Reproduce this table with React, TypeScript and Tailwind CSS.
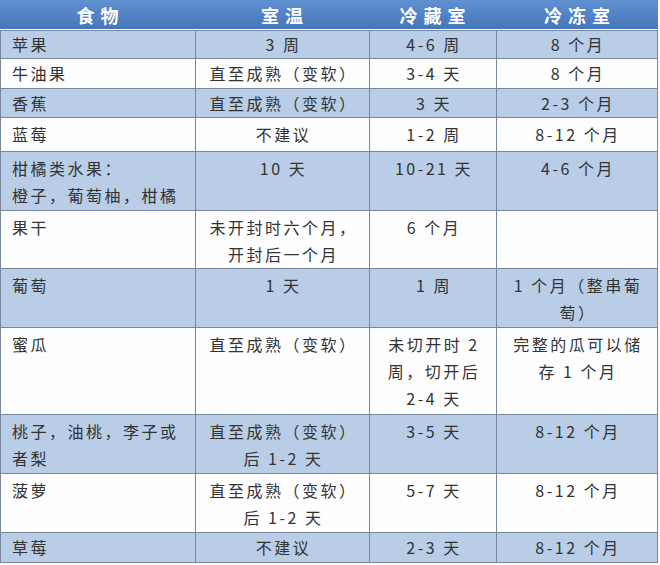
import React from "react";

type Row = {
  h: string;
  bg: string;
  multi: boolean;
  cells: string[][];
};

const BLUE = "bg-[#b9cde6]";
const WHITE = "bg-[#fdfdfe]";

const rows: Row[] = [
  { h: "h-[27px]", bg: BLUE, multi: false, cells: [["苹果"], ["3 周"], ["4-6 周"], ["8 个月"]] },
  { h: "h-[29px]", bg: WHITE, multi: false, cells: [["牛油果"], ["直至成熟（变软）"], ["3-4 天"], ["8 个月"]] },
  { h: "h-[28px]", bg: BLUE, multi: false, cells: [["香蕉"], ["直至成熟（变软）"], ["3 天"], ["2-3 个月"]] },
  { h: "h-[33px]", bg: WHITE, multi: false, cells: [["蓝莓"], ["不建议"], ["1-2 周"], ["8-12 个月"]] },
  { h: "h-[58px]", bg: BLUE, multi: true, cells: [["柑橘类水果：", "橙子，葡萄柚，柑橘"], ["10 天"], ["10-21 天"], ["4-6 个月"]] },
  { h: "h-[57px]", bg: WHITE, multi: true, cells: [["果干"], ["未开封时六个月，", "开封后一个月"], ["6 个月"], [""]] },
  { h: "h-[58px]", bg: BLUE, multi: true, cells: [["葡萄"], ["1 天"], ["1 周"], ["1 个月（整串葡", "萄）"]] },
  { h: "h-[86px]", bg: WHITE, multi: true, cells: [["蜜瓜"], ["直至成熟（变软）"], ["未切开时 2", "周，切开后", "2-4 天"], ["完整的瓜可以储", "存 1 个月"]] },
  { h: "h-[58px]", bg: BLUE, multi: true, cells: [["桃子，油桃，李子或", "者梨"], ["直至成熟（变软）", "后 1-2 天"], ["3-5 天"], ["8-12 个月"]] },
  { h: "h-[58px]", bg: WHITE, multi: true, cells: [["菠萝"], ["直至成熟（变软）", "后 1-2 天"], ["5-7 天"], ["8-12 个月"]] },
  { h: "h-[29px]", bg: BLUE, multi: false, cells: [["草莓"], ["不建议"], ["2-3 天"], ["8-12 个月"]] },
];

const headers = ["食物", "室温", "冷藏室", "冷冻室"];

export default function App() {
  return (
    <div
      className="w-[660px] h-[565px] bg-white overflow-hidden text-[#333333]"
      style={{ fontFamily: '"Noto Sans CJK SC", "Noto Sans", sans-serif' }}
    >
      <div className="w-[658px]">
        <div className="grid grid-cols-[195px_174px_127px_162px] h-[29px] bg-gradient-to-b from-[#5f90d0] to-[#4676ba]">
          {headers.map((t) => (
            <div
              key={t}
              className="flex items-center justify-center text-white font-bold text-[18px] tracking-[6px] pl-[6px] leading-none"
            >
              {t}
            </div>
          ))}
        </div>
        <div className="h-px bg-white" />
        <div className="grid grid-cols-[194px_173px_126px_160px] gap-px bg-[#75869d] border border-[#75869d] border-b-0">
          {rows.map((r, ri) =>
            r.cells.map((c, ci) => (
              <div
                key={ri + "-" + ci}
                className={`${r.h} ${r.bg} flex flex-col text-[16px] tracking-[2.5px] leading-[27px] ${
                  r.multi ? "pt-[3px]" : "justify-center"
                } ${ci === 0 ? "items-start pl-[11px]" : "items-center pl-[2px]"}`}
              >
                {c.map((line, li) => (
                  <span key={li} className="whitespace-nowrap">
                    {line}
                  </span>
                ))}
              </div>
            ))
          )}
        </div>
        <div className="h-px bg-[#75869d]" />
      </div>
    </div>
  );
}
